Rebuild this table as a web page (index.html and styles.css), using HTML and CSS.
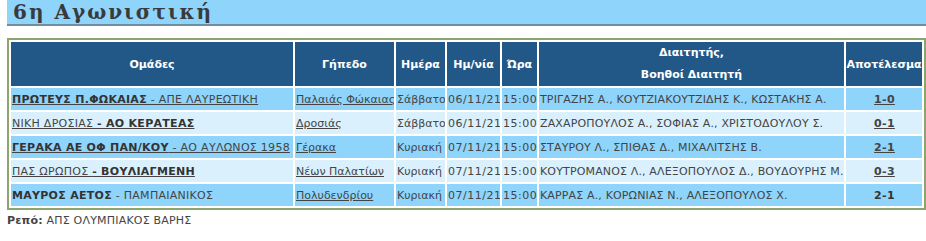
FILE: index.html
```html
<!DOCTYPE html>
<html lang="el">
<head>
<meta charset="utf-8">
<link rel="stylesheet" href="styles.css">
</head>
<body>
<div class="page">
  <h1 class="title">6η Αγωνιστική</h1>
  <table class="games">
    <colgroup>
      <col class="c-team"><col class="c-field"><col class="c-day"><col class="c-date"><col class="c-time"><col class="c-ref"><col class="c-res">
    </colgroup>
    <thead>
      <tr>
        <th>Ομάδες</th>
        <th>Γήπεδο</th>
        <th>Ημέρα</th>
        <th>Ημ/νία</th>
        <th>Ώρα</th>
        <th class="two">Διαιτητής,<br>Βοηθοί Διαιτητή</th>
        <th>Αποτέλεσμα</th>
      </tr>
    </thead>
    <tbody>
      <tr class="odd">
        <td class="team"><a href="#"><b>ΠΡΩΤΕΥΣ Π.ΦΩΚΑΙΑΣ</b> - ΑΠΕ ΛΑΥΡΕΩΤΙΚΗ</a></td>
        <td class="field"><a href="#">Παλαιάς Φώκαιας</a></td>
        <td>Σάββατο</td>
        <td class="num">06/11/21</td>
        <td class="num">15:00</td>
        <td class="ref">ΤΡΙΓΑΖΗΣ Α., ΚΟΥΤΖΙΑΚΟΥΤΖΙΔΗΣ Κ., ΚΩΣΤΑΚΗΣ Α.</td>
        <td class="res"><a href="#">1-0</a></td>
      </tr>
      <tr class="even">
        <td class="team"><a href="#">ΝΙΚΗ ΔΡΟΣΙΑΣ <b>- ΑΟ ΚΕΡΑΤΕΑΣ</b></a></td>
        <td class="field"><a href="#">Δροσιάς</a></td>
        <td>Σάββατο</td>
        <td class="num">06/11/21</td>
        <td class="num">15:00</td>
        <td class="ref">ΖΑΧΑΡΟΠΟΥΛΟΣ Α., ΣΟΦΙΑΣ Α., ΧΡΙΣΤΟΔΟΥΛΟΥ Σ.</td>
        <td class="res"><a href="#">0-1</a></td>
      </tr>
      <tr class="odd">
        <td class="team"><a href="#"><b>ΓΕΡΑΚΑ ΑΕ ΟΦ ΠΑΝ/ΚΟΥ</b> - ΑΟ ΑΥΛΩΝΟΣ 1958</a></td>
        <td class="field"><a href="#">Γέρακα</a></td>
        <td>Κυριακή</td>
        <td class="num">07/11/21</td>
        <td class="num">15:00</td>
        <td class="ref">ΣΤΑΥΡΟΥ Λ., ΣΠΙΘΑΣ Δ., ΜΙΧΑΛΙΤΣΗΣ Β.</td>
        <td class="res"><a href="#">2-1</a></td>
      </tr>
      <tr class="even">
        <td class="team"><a href="#">ΠΑΣ ΩΡΩΠΟΣ <b>- ΒΟΥΛΙΑΓΜΕΝΗ</b></a></td>
        <td class="field"><a href="#">Νέων Παλατίων</a></td>
        <td>Κυριακή</td>
        <td class="num">07/11/21</td>
        <td class="num">15:00</td>
        <td class="ref">ΚΟΥΤΡΟΜΑΝΟΣ Λ., ΑΛΕΞΟΠΟΥΛΟΣ Δ., ΒΟΥΔΟΥΡΗΣ Μ.</td>
        <td class="res"><a href="#">0-3</a></td>
      </tr>
      <tr class="odd">
        <td class="team"><span class="plain"><b>ΜΑΥΡΟΣ ΑΕΤΟΣ</b> - ΠΑΜΠΑΙΑΝΙΚΟΣ</span></td>
        <td class="field"><a href="#">Πολυδενδρίου</a></td>
        <td>Κυριακή</td>
        <td class="num">07/11/21</td>
        <td class="num">15:00</td>
        <td class="ref">ΚΑΡΡΑΣ Α., ΚΟΡΩΝΙΑΣ Ν., ΑΛΕΞΟΠΟΥΛΟΣ Χ.</td>
        <td class="res"><b>2-1</b></td>
      </tr>
    </tbody>
  </table>
  <p class="rest"><b>Ρεπό:</b> ΑΠΣ ΟΛΥΜΠΙΑΚΟΣ ΒΑΡΗΣ</p>
</div>
</body>
</html>
```

FILE: styles.css
```css
html, body {
  margin: 0;
  padding: 0;
  background: #ffffff;
}

body {
  font-family: "DejaVu Sans", Verdana, sans-serif;
  font-size: 11px;
  color: #444;
  overflow: hidden;
}

.page {
  padding: 0 0 0 7px;
}

.title {
  margin: 0;
  height: 24px;
  padding: 0 0 0 6px;
  background: #8fd4fb;
  border-bottom: 2px solid #6f8ea3;
  font-family: "DejaVu Serif", "Liberation Serif", serif;
  font-size: 20px;
  font-weight: bold;
  letter-spacing: 2px;
  line-height: 24px;
  color: #3a3a3a;
}

.games {
  margin-top: 12px;
  width: 917px;
  table-layout: fixed;
  border: 2px solid #8ca46d;
  border-spacing: 2px;
  border-collapse: separate;
}

.c-team { width: 282px; }
.c-field { width: 99px; }
.c-day { width: 49px; }
.c-date { width: 53px; }
.c-time { width: 35px; }
.c-ref { width: 305px; }
.c-res { width: 76px; }

.games th {
  background: #225887;
  color: #ffffff;
  font-weight: bold;
  height: 43px;
  padding: 0;
  text-align: center;
  white-space: nowrap;
  overflow: hidden;
}

.games th.two {
  line-height: 22px;
}

.games td {
  height: 22px;
  padding: 0 0 0 1px;
  white-space: nowrap;
  overflow: hidden;
  color: #444;
}

.games td.team {
  letter-spacing: 0.28px;
}

.games td.field {
  padding-left: 1px;
  padding-right: 0;
}

.games td.ref {
  letter-spacing: 0.15px;
}

.games td.num {
  letter-spacing: 0.5px;
}

.odd td { background: #8fd4fb; }
.even td { background: #daf1fd; }

.games a {
  color: #444;
  text-decoration: underline;
}

.games b {
  color: #333;
}

.games td.res {
  text-align: center;
  font-weight: bold;
  letter-spacing: 0.3px;
}

.rest {
  margin: 4px 0 0 0;
  color: #444;
  letter-spacing: 0.2px;
}

.rest b {
  color: #444;
}
```
